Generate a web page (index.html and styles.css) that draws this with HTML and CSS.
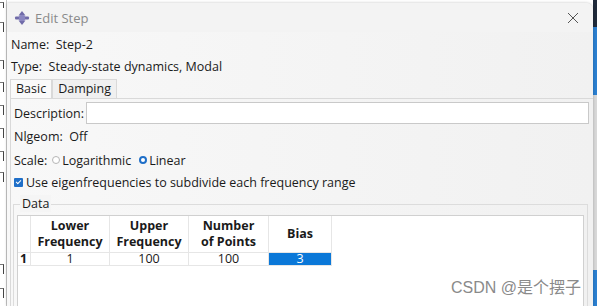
FILE: index.html
```html
<!DOCTYPE html>
<html lang="en">
<head>
    <meta charset="UTF-8">
    <title>Edit Step</title>
    <link rel="stylesheet" href="styles.css">
</head>
<body>
    <div class="backdrop">
        <div class="behind-left">
            <i style="top: 2px; height: 6px;"></i>
            <i style="top: 22px; height: 10px;"></i>
            <i style="top: 60px; height: 9px;"></i>
            <i style="top: 82px; height: 10px;"></i>
            <i style="top: 105px; height: 10px;"></i>
            <i style="top: 128px; height: 10px;"></i>
            <i style="top: 151px; height: 10px;"></i>
            <i style="top: 172px; height: 10px;"></i>
            <i style="top: 264px; height: 10px;"></i>
            <i style="top: 288px; height: 10px;"></i>
        </div>

        <div class="dialog">
            <div class="titlebar">
                <svg class="app-icon" width="16" height="16" viewBox="0 0 16 16">
                    <path d="M8 1 L11.5 5.5 L4.5 5.5 Z" fill="#6f6aa8"/>
                    <path d="M8 15 L11.5 10.5 L4.5 10.5 Z" fill="#6f6aa8"/>
                    <rect x="1" y="6.5" width="14" height="3" rx="1" fill="#6f6aa8"/>
                    <circle cx="8" cy="8" r="3.2" fill="#8a86c0"/>
                </svg>
                <span class="title">Edit Step</span>
                <svg class="close" width="12" height="12" viewBox="0 0 12 12">
                    <path d="M1 1 L11 11 M11 1 L1 11" stroke="#555" stroke-width="1"/>
                </svg>
            </div>

            <div class="body">
                <div class="line">Name:&nbsp; Step-2</div>
                <div class="line">Type:&nbsp; Steady-state dynamics, Modal</div>

                <div class="tabs">
                    <div class="tab active">Basic</div>
                    <div class="tab">Damping</div>
                </div>

                <div class="panel">
                    <div class="row desc">
                        <label>Description:</label>
                        <div class="input"></div>
                    </div>
                    <div class="row nlgeom">Nlgeom:&nbsp; Off</div>
                    <div class="row scale">
                        Scale:
                        <span class="radio"></span>Logarithmic
                        <span class="radio on"></span>Linear
                    </div>
                    <div class="row eigen">
                        <span class="check"></span>Use eigenfrequencies to subdivide each frequency range
                    </div>

                    <div class="group">
                        <span class="legend">Data</span>
                        <div class="table">
                            <div class="corner"></div>
                            <div class="th">Lower<br>Frequency</div>
                            <div class="th">Upper<br>Frequency</div>
                            <div class="th">Number<br>of Points</div>
                            <div class="th">Bias</div>
                            <div class="rh">1</div>
                            <div class="td">1</div>
                            <div class="td">100</div>
                            <div class="td">100</div>
                            <div class="td sel">3</div>
                        </div>
                    </div>
                </div>
            </div>
            <div class="watermark">CSDN @是个摆子</div>
        </div>

        <div class="behind-right"></div>
    </div>
</body>
</html>
```

FILE: styles.css
```css
* {
    margin: 0;
    padding: 0;
    box-sizing: border-box;
}

body {
    width: 597px;
    height: 306px;
    overflow: hidden;
    font-family: 'Open Sans', 'Noto Sans', sans-serif;
    font-size: 12.5px;
    color: #1a1a1a;
    background: #ffffff;
}

.backdrop {
    display: flex;
    height: 306px;
    overflow: hidden;
}

/* window behind the dialog, only a sliver of it shows */
.behind-left {
    position: relative;
    width: 7px;
    flex: none;
    background: #ffffff;
    border-right: 1px solid #c8c8c8;
}

.behind-left i {
    position: absolute;
    left: 0;
    width: 4px;
    border-right: 1px solid #444;
    border-top: 1px solid #777;
}

.behind-right {
    width: 4px;
    flex: none;
    background: linear-gradient(#1f2a3a 0, #1f2a3a 27px, #2b7fd0 27px, #2b7fd0 95px, #d8d8d8 95px, #d8d8d8 270px, #2b7fd0 270px);
}

.dialog {
    position: relative;
    flex: 1;
    margin-top: 3px;
    background: #f7f7f7;
    border-top-right-radius: 7px;
    box-shadow: 0 0 3px rgba(0, 0, 0, 0.25);
    display: flex;
    flex-direction: column;
    overflow: hidden;
}

.titlebar {
    height: 29px;
    flex: none;
    display: flex;
    align-items: center;
    padding: 0 9px 0 7px;
    background: #f3f3f3;
    border-top-right-radius: 7px;
}

.app-icon {
    margin-right: 5px;
}

.title {
    color: #8a8a8a;
    font-size: 13px;
    flex: 1;
}

.close {
    margin-right: 5px;
}

.body {
    flex: 1;
    padding: 2px 0 0 3px;
    background: linear-gradient(90deg, #f8f8f8, #f1f1f1);
}

.line {
    height: 22px;
    line-height: 22px;
    padding-left: 1px;
}

.tabs {
    display: flex;
    margin-top: 1px;
    height: 19px;
}

.tab {
    padding: 0 5px;
    line-height: 18px;
    border: 1px solid #d9d9d9;
    border-bottom: none;
    background: #f0f0f0;
}

.tab.active {
    background: #fafafa;
}

.panel {
    border-top: 1px solid #d9d9d9;
    border-left: 1px solid #d9d9d9;
    padding: 2px 0 0 0;
}

.row {
    display: flex;
    align-items: center;
    padding-left: 3px;
}

.desc {
    height: 24px;
}

.nlgeom {
    height: 23px;
}

.scale {
    height: 24px;
}

.eigen {
    height: 20px;
}

.desc label {
    margin-right: 2px;
}

.input {
    flex: 1;
    height: 22px;
    margin-right: 4px;
    background: #ffffff;
    border: 1px solid #c9c9c9;
}

.radio {
    width: 8px;
    height: 8px;
    border-radius: 50%;
    border: 1px solid #b5b5b5;
    margin: 0 2px 0 5px;
    background: #fff;
}

.radio.on {
    border: 2.5px solid #1f6fc8;
    margin-left: 8px;
}

.check {
    width: 9px;
    height: 9px;
    background: #1f6fc8;
    border-radius: 1px;
    margin-right: 3px;
    position: relative;
}

.check::after {
    content: "";
    position: absolute;
    left: 2px;
    top: 2px;
    width: 4px;
    height: 2px;
    border-left: 1px solid #fff;
    border-bottom: 1px solid #fff;
    transform: rotate(-45deg);
}

.group {
    position: relative;
    margin: 12px 5px 0 2px;
    border: 1px solid #dcdcdc;
    border-bottom: none;
    height: 110px;
    padding: 10px 3px 0 3px;
}

.legend {
    position: absolute;
    top: -10px;
    left: 6px;
    padding: 0 2px;
    background: #f5f5f5;
}

.table {
    background: #ffffff;
    border: 1px solid #d0d0d0;
    height: 100%;
    display: grid;
    grid-template-columns: 13px 79px 79px 80px 63px;
    grid-template-rows: 37px 13px;
    align-content: start;
}

.corner,
.th,
.rh,
.td {
    border-right: 1px solid #e6e6e6;
    border-bottom: 1px solid #e6e6e6;
}

.th {
    font-weight: bold;
    text-align: center;
    line-height: 16px;
    display: flex;
    align-items: center;
    justify-content: center;
}

.rh {
    font-weight: bold;
    line-height: 12px;
    padding-left: 2px;
}

.td {
    text-align: center;
    line-height: 12px;
}

.td.sel {
    background: #0b78d8;
    color: #ffffff;
}

.watermark {
    position: absolute;
    right: 12px;
    bottom: 8px;
    font-family: 'Liberation Sans', 'Noto Sans CJK SC', sans-serif;
    font-size: 16px;
    color: #8a8a8a;
}
```
